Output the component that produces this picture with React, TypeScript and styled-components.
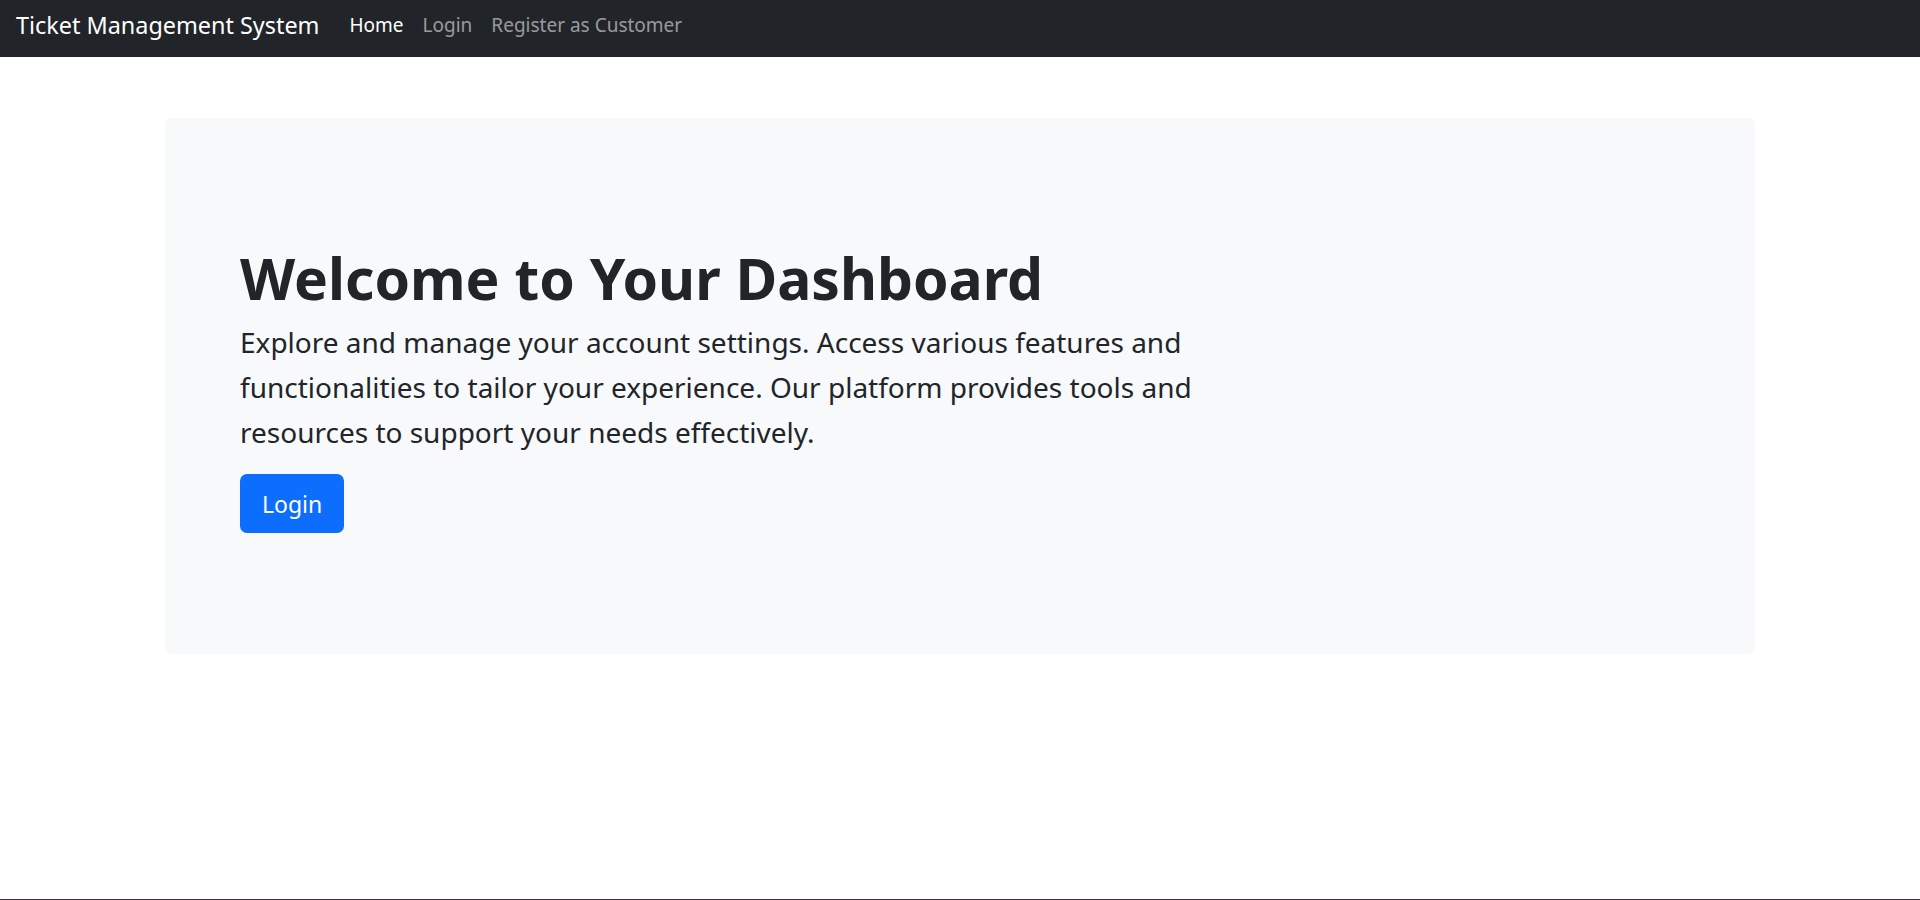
import * as React from 'react';
import styled, { createGlobalStyle } from 'styled-components';

const GlobalStyle = createGlobalStyle`
  html, body {
    margin: 0;
    padding: 0;
    background: #ffffff;
  }

  body {
    font-family: "Noto Sans", "Open Sans", sans-serif;
    color: #212529;
  }

  * {
    box-sizing: border-box;
  }
`;

const Page = styled.div`
  min-height: 100vh;
  border-bottom: 1px solid #3d393d;
`;

const Navbar = styled.nav`
  height: 57px;
  background-color: #212529;
  display: flex;
  align-items: center;
  padding: 0 16px 7px;
`;

const Brand = styled.a`
  color: #ffffff;
  font-size: 23.4px;
  text-decoration: none;
  margin-right: 30px;
  white-space: nowrap;
`;

const NavList = styled.ul`
  display: flex;
  gap: 19px;
  list-style: none;
  margin: 0;
  padding: 0;
`;

const NavLink = styled.a<{ $active?: boolean }>`
  font-size: 19px;
  color: ${({ $active }) => ($active ? '#ffffff' : 'rgba(255, 255, 255, 0.55)')};
  text-decoration: none;
`;

const Main = styled.main`
  padding-top: 61px;
`;

const Jumbotron = styled.section`
  width: 1590px;
  margin: 0 auto;
  padding: 126px 75px 121px;
  background-color: #f8f9fa;
  border-radius: 7px;
`;

const Title = styled.h1`
  margin: 0 0 8px;
  font-size: 57px;
  font-weight: 700;
  line-height: 1.2;
  color: #212529;
`;

const Lead = styled.p`
  margin: 0 0 19px;
  max-width: 1000px;
  font-size: 28px;
  line-height: 45px;
  color: #212529;
`;

const PrimaryButton = styled.button`
  height: 59px;
  padding: 0 22px;
  border: none;
  border-radius: 7px;
  background-color: #0d6efd;
  color: #ffffff;
  font-family: inherit;
  font-size: 23px;
  cursor: pointer;
`;

const links = [
  { label: 'Home', active: true },
  { label: 'Login' },
  { label: 'Register as Customer' },
];

export default function App() {
  return (
    <Page>
      <GlobalStyle />
      <Navbar>
        <Brand href="#">Ticket Management System</Brand>
        <NavList>
          {links.map(({ label, active }) => (
            <li key={label}>
              <NavLink href="#" $active={active}>{label}</NavLink>
            </li>
          ))}
        </NavList>
      </Navbar>
      <Main>
        <Jumbotron>
          <Title>Welcome to Your Dashboard</Title>
          <Lead>
            Explore and manage your account settings. Access various features and
            functionalities to tailor your experience. Our platform provides tools and
            resources to support your needs effectively.
          </Lead>
          <PrimaryButton>Login</PrimaryButton>
        </Jumbotron>
      </Main>
    </Page>
  );
}
